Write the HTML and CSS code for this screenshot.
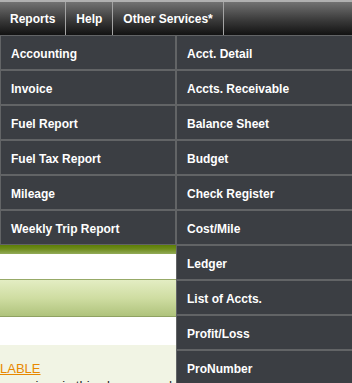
FILE: index.html
```html
<!DOCTYPE html>
<html>
<head>
<meta charset="utf-8">
<link rel="stylesheet" href="styles.css">
</head>
<body>
<nav class="topbar">
  <a class="nav-item">Reports</a>
  <a class="nav-item">Help</a>
  <a class="nav-item">Other Services*</a>
</nav>
<main class="page">
  <div class="page-top"></div>
  <div class="green-bar"></div>
  <div class="white-row"></div>
  <div class="section-head"></div>
  <div class="white-row short"></div>
  <div class="content">
    <a class="avail">LABLE</a>
    <p class="note">e services in this plan are and can be used</p>
  </div>
</main>
<div class="dropdown">
  <ul class="col col-left">
    <li class="item">Accounting</li>
    <li class="item">Invoice</li>
    <li class="item">Fuel Report</li>
    <li class="item">Fuel Tax Report</li>
    <li class="item">Mileage</li>
    <li class="item">Weekly Trip Report</li>
  </ul>
  <ul class="col col-right">
    <li class="item">Acct. Detail</li>
    <li class="item">Accts. Receivable</li>
    <li class="item">Balance Sheet</li>
    <li class="item">Budget</li>
    <li class="item">Check Register</li>
    <li class="item">Cost/Mile</li>
    <li class="item">Ledger</li>
    <li class="item">List of Accts.</li>
    <li class="item">Profit/Loss</li>
    <li class="item">ProNumber</li>
  </ul>
</div>
</body>
</html>
```

FILE: styles.css
```css
* { box-sizing: border-box; }
html, body {
  margin: 0;
  padding: 0;
  overflow: hidden;
  background: #fff;
  font-family: "Liberation Sans", Arial, sans-serif;
}
body { position: relative; width: 352px; height: 383px; }

.topbar {
  display: flex;
  height: 35px;
  border-top: 2px solid #b0b0b0;
  background: linear-gradient(to bottom, #727272 0%, #3a3a3a 55%, #121212 100%);
}
.nav-item {
  display: flex;
  align-items: center;
  padding: 1px 10px 0 10px;
  border-right: 1px solid #a4a4a4;
  color: #fff;
  font-size: 12px;
  font-weight: bold;
}

.page { display: flex; flex-direction: column; }
.page-top { height: 209px; background: #fff; }
.green-bar {
  height: 10px;
  background: linear-gradient(to bottom, #587a00 0%, #6e8c1c 50%, #93ab5a 100%);
}
.white-row { height: 25px; background: #fff; }
.white-row.short { height: 28px; }
.section-head {
  height: 38px;
  border-top: 1px solid #97aa68;
  border-bottom: 1px solid #8fa262;
  background: linear-gradient(to bottom, #e3edc3 0%, #cfdda2 50%, #afc37c 100%);
}
.content {
  background: #f1f4e4;
  padding: 16px 0 0 0;
  height: 60px;
  font-size: 13px;
  line-height: 15px;
}
.avail {
  display: block;
  color: #e88800;
  text-decoration: underline;
}
.note { margin: 2px 0 0 0; color: #222; white-space: nowrap; }

.dropdown {
  position: absolute;
  top: 35px;
  left: 0;
  display: flex;
  align-items: flex-start;
}
.col { list-style: none; margin: 0; padding: 0; }
.col-left { width: 176px; }
.col-right { width: 180px; }
.item {
  display: flex;
  align-items: center;
  height: 35px;
  padding: 2px 0 0 10px;
  background: #3b3e43;
  border: 1px solid #626466;
  color: #fff;
  font-size: 12px;
  font-weight: bold;
  white-space: nowrap;
}
```
